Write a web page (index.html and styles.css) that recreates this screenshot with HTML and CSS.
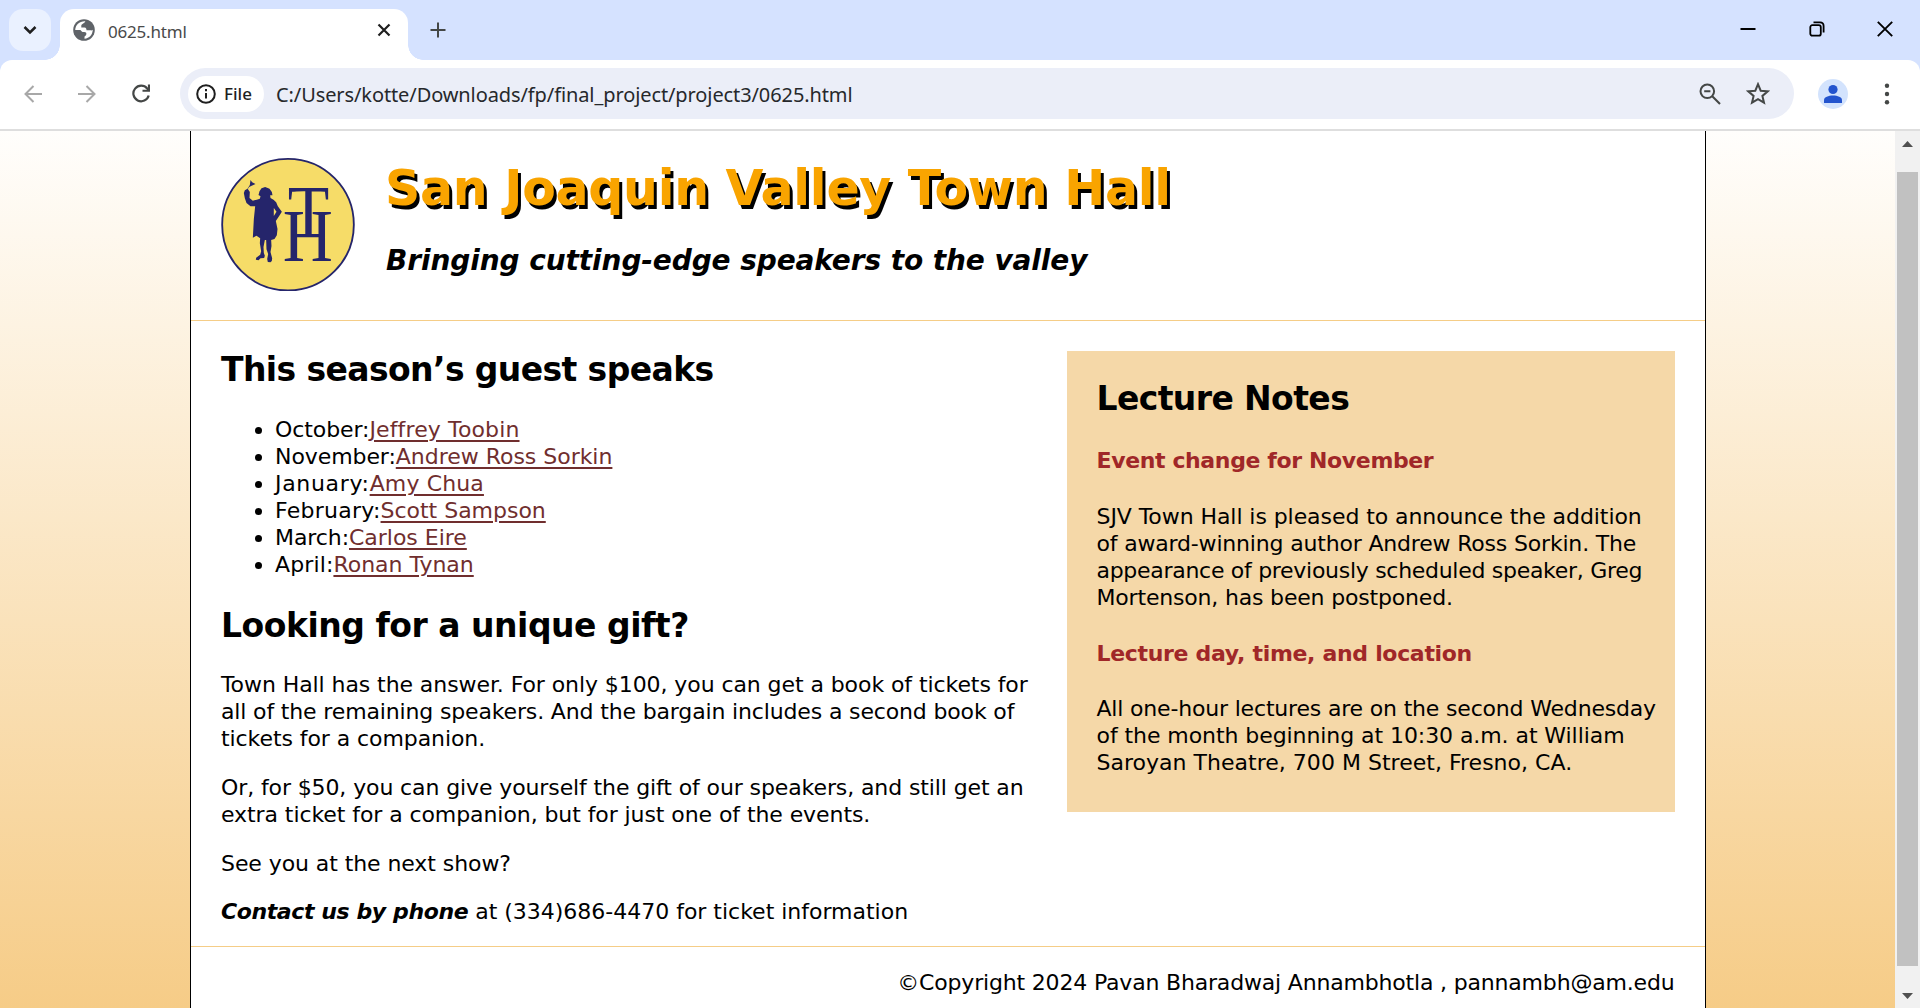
FILE: index.html
```html
<!DOCTYPE html>
<html lang="en">
<head>
<meta charset="utf-8">
<title>0625.html</title>
<link rel="stylesheet" href="styles.css">
</head>
<body>
<div class="browser">
  <div class="tabstrip">
    <div class="tab-search"><svg width="42" height="42" viewBox="0 0 42 42"><path d="M15.500 18l5.500 5.500 5.500-5.500" fill="none" stroke="#1f1f1f" stroke-width="2.500"/></svg></div>
    <div class="tab">
      <svg class="globe" width="22" height="22" viewBox="0 0 22 22"><circle cx="11" cy="11" r="10.800" fill="#5f6368"/><path d="M12.300 2.300C12 4.500 8.300 4.500 8.300 6.800V8.500H11.500C13.200 8.500 13.500 10 13.500 11.300H17.200C18 11.300 18.500 12 19.800 10.800C19.500 16 16.500 19.300 11.500 19.800V17.800C11.500 17 13.400 17 13.400 14.800C13.400 12.900 12 12.900 9.500 12.900C8.500 12.900 8.200 11 7 11H2.200C2.500 6 6.500 2 12.300 2.300Z" fill="#fff"/></svg>
      <span class="tab-title">0625.html</span>
      <svg class="tab-close" width="14" height="14" viewBox="0 0 14 14"><path d="M1.500 1.500l11 11M12.500 1.500l-11 11" stroke="#1f1f1f" stroke-width="2.200"/></svg>
    </div>
    <svg class="new-tab" width="16" height="16" viewBox="0 0 16 16"><path d="M8 .5v15M.5 8h15" stroke="#444746" stroke-width="2"/></svg>
    <div class="window-buttons">
      <svg width="16" height="16" viewBox="0 0 16 16"><path d="M.5 9h15" transform="translate(0 -1)" stroke="#000" stroke-width="2"/></svg>
      <svg width="16" height="16" viewBox="0 0 16 16"><rect x="1.300" y="4.200" width="10.500" height="10.500" rx="2" fill="none" stroke="#000" stroke-width="1.800"/><path d="M4.500 1.300H11Q14.600 1.300 14.600 5V11.500" fill="none" stroke="#000" stroke-width="1.800"/></svg>
      <svg width="16" height="16" viewBox="0 0 16 16"><path d="M.8.800l14.400 14.400M15.200.800L.8 15.200" stroke="#000" stroke-width="1.900"/></svg>
    </div>
  </div>
  <div class="toolbar">
    <svg class="back" width="18" height="18" viewBox="0 0 18 18"><path d="M18 9H2M9.500 1L1.500 9l8 8" fill="none" stroke="#a8a8a8" stroke-width="2"/></svg>
    <svg class="forward" width="18" height="18" viewBox="0 0 18 18"><path d="M0 9h16M8.500 1l8 8-8 8" fill="none" stroke="#a8a8a8" stroke-width="2"/></svg>
    <svg class="reload" width="19" height="19" viewBox="0 0 19 19"><path d="M16.700 11.500A7.800 7.800 0 1 1 15.200 4.500L17 6.500" fill="none" stroke="#444746" stroke-width="2.200"/><path d="M18 .5V7.800H10.500V5.700H15.900V.5Z" fill="#444746"/></svg>
    <div class="omnibox">
      <div class="chip">
        <svg width="20" height="20" viewBox="0 0 20 20"><circle cx="10" cy="10" r="8.800" fill="none" stroke="#1f1f1f" stroke-width="2"/><path d="M10 9v5.500M10 5v2.200" stroke="#1f1f1f" stroke-width="2"/></svg>
        <span>File</span>
      </div>
      <span class="url">C:/Users/kotte/Downloads/fp/final_project/project3/0625.html</span>
      <svg class="zoom-out" width="22" height="22" viewBox="0 0 22 22"><circle cx="8.300" cy="8.300" r="6.800" fill="none" stroke="#444746" stroke-width="2"/><path d="M13 13l8 8M5.200 8.300h6.200" stroke="#444746" stroke-width="2.100"/></svg>
      <svg class="star" width="24" height="23" viewBox="0 0 24 23"><path d="M12 2.200l2.700 6.500 7 .6-5.300 4.600 1.600 6.800L12 17.100l-6 3.600 1.600-6.800L2.300 9.300l7-.6z" fill="none" stroke="#444746" stroke-width="2"/></svg>
    </div>
    <svg class="profile" width="30" height="30" viewBox="0 0 30 30"><circle cx="15" cy="15" r="15" fill="#d3e3fd"/><circle cx="15" cy="10.500" r="4.600" fill="#2354ce"/><path d="M6 24V21.200C6 15 24 15 24 21.200V24Z" fill="#2354ce"/></svg>
    <svg class="menu" width="6" height="22" viewBox="0 0 6 22"><g fill="#444746"><circle cx="3" cy="2.700" r="2.200"/><circle cx="3" cy="11" r="2.200"/><circle cx="3" cy="19.300" r="2.200"/></g></svg>
  </div>
  <div class="viewport">
    <div class="page">
      <div class="container">
        <header>
          <svg class="logo" width="134" height="134" viewBox="123.500 80 402 402">
            <circle cx="324.500" cy="283" r="197.500" fill="#f6dc68" stroke="#25256b" stroke-width="5.500"/>
            <g transform="translate(165 120)" fill="#25256b">
              <path d="M47 29L52 36L62 41L49 47L43 50L39 56L45 65L44 83L54 91L66 88L75 85L77 78L71 74L74 63L80 54L91 50L104 55L111 65L113 75L106 75L107 83L116 88L124 96L129 108L141 124L133 137L123 152L128 176L126 195L119 206L109 209L110 227L107 245L112 264L111 272L107 276L99 275L97 266L100 251L95 237L94 209H90L86 230L87 248L90 256L88 263L77 264L71 270L63 268L64 262L76 253L79 243L75 219L76 204L65 196L54 202L57 147L61 108L47 108L35 98L30 84L27 68L30 60L38 55L45 44Z"/>
              <path d="M117 113L125 124L117 137Z" fill="#f6dc68"/>
              <text class="mono-h" transform="translate(144 273) scale(.93 1)">H</text>
              <text class="mono-t" transform="translate(159 200) scale(.91 1)">T</text>
            </g>
          </svg>
          <div class="titles">
            <h1>San Joaquin Valley Town Hall</h1>
            <p class="tagline">Bringing cutting-edge speakers to the valley</p>
          </div>
        </header>
        <div class="columns">
          <main>
            <h2>This season’s guest speaks</h2>
            <ul>
              <li>October:<a href="#">Jeffrey Toobin</a></li>
              <li>November:<a class="snug" href="#">Andrew Ross Sorkin</a></li>
              <li><span class="january">January:</span><a href="#">Amy Chua</a></li>
              <li><span class="february">February:</span><a class="snug" href="#">Scott Sampson</a></li>
              <li>March:<a class="snug" href="#">Carlos Eire</a></li>
              <li><span class="april">April:</span><a class="snug" href="#">Ronan Tynan</a></li>
            </ul>
            <h2 class="gift">Looking for a unique gift?</h2>
            <p>Town Hall has the answer. For only $100, you can get a book of tickets for<br><span class="snugger">all of the remaining speakers. And the bargain includes a second book of</span><br>tickets for a companion.</p>
            <p><span class="offer">Or, for $50, you can give yourself the gift of our speakers, and still get an</span><br>extra ticket for a companion, but for just one of the events.</p>
            <p>See you at the next show?</p>
            <p class="contact"><em>Contact us by phone</em> at (334)686-4470 for ticket information</p>
          </main>
          <aside>
            <h2>Lecture Notes</h2>
            <h3>Event change for November</h3>
            <p><span class="loose">SJV Town Hall is pleased to announce the addition</span><br>of award-winning author Andrew Ross Sorkin. The<br><span class="tight">appearance of previously scheduled speaker, Greg</span><br>Mortenson, has been postponed.</p>
            <h3 class="where">Lecture day, time, and location</h3>
            <p>All one-hour lectures are on the second Wednesday<br><span class="loose">of the month beginning at 10:30 a.m. at William</span><br><span class="theatre">Saroyan Theatre, 700 M Street, Fresno, CA.</span></p>
          </aside>
        </div>
        <footer>©Copyright 2024 Pavan Bharadwaj Annambhotla , pannambh@am.edu</footer>
      </div>
    </div>
    <div class="scrollbar">
      <svg width="11" height="6" viewBox="0 0 11 6"><path d="M0 6L5.500 0 11 6Z" fill="#505050"/></svg>
      <div class="thumb"></div>
      <svg width="11" height="6" viewBox="0 0 11 6"><path d="M0 0L5.500 6 11 0Z" fill="#505050"/></svg>
    </div>
  </div>
</div>
</body>
</html>
```
FILE: styles.css
```css
* { box-sizing: border-box; }
body { margin: 0; background: #fff; }
h1, h2, h3, p, ul { margin: 0; padding: 0; }
svg { display: block; flex: none; }

.browser { width: 1920px; height: 1008px; display: flex; flex-direction: column; overflow: hidden; background: #d5e2ff; }

.tabstrip { height: 60px; flex: none; display: flex; align-items: flex-start; padding: 9px 27px 0 9px; }
.tab-search { width: 42px; height: 42px; border-radius: 14px; background: #eaf1ff; }
.tab { position: relative; width: 348px; height: 51px; margin-left: 9px; padding: 0 17px 9px 13px; border-radius: 14px 14px 0 0; background: #fff; display: flex; align-items: center; }
.tab::before, .tab::after { content: ""; position: absolute; bottom: 0; width: 15px; height: 15px; }
.tab::before { left: -15px; background: radial-gradient(circle at 0 0, transparent 14.5px, #fff 15px); }
.tab::after { right: -15px; background: radial-gradient(circle at 100% 0, transparent 14.5px, #fff 15px); }
.tab-title { margin-left: 13px; padding-top: 3px; flex: 1; font: 17px/24px "Noto Sans", "Open Sans", sans-serif; letter-spacing: -.2px; color: #4a4a4a; }
.new-tab { margin: 13px 0 0 22px; }
.window-buttons { margin: 12px 0 0 auto; display: flex; gap: 52.5px; }

.toolbar { height: 71px; flex: none; display: flex; align-items: center; padding: 0 30px 2px 24px; border-bottom: 2px solid #dedede; border-radius: 12px 12px 0 0; background: #fff; }
.forward { margin-left: 36px; }
.reload { margin-left: 36px; }
.omnibox { width: 1614px; height: 51px; margin-left: 29px; border-radius: 26px; background: #ebeef8; display: flex; align-items: center; padding: 0 24px 0 8px; }
.chip { width: 76px; height: 36px; border-radius: 18px; background: #fff; display: flex; align-items: center; padding-left: 8px; gap: 8px; font: 500 17px/24px "Noto Sans", "Open Sans", sans-serif; color: #1f1f1f; }
.chip span { padding-top: 1px; }
.url { flex: 1; margin-left: 12px; padding-top: 2px; font: 20px/28px "Noto Sans", "Open Sans", sans-serif; letter-spacing: -.1px; color: #26282b; }
.star { margin-left: 25px; }
.profile { margin-left: 24px; }
.menu { margin-left: 36px; }

.viewport { flex: 1; display: flex; min-height: 0; }
.page { width: 1895px; display: flex; padding-left: 190px; background: linear-gradient(#fffefc, #f6cc87); font: 22px/27px "DejaVu Sans", Verdana, sans-serif; color: #000; letter-spacing: -.08px; white-space: nowrap; }
.container { width: 1516px; border: solid #000; border-width: 0 1px; background: #fff; }

header { height: 190px; display: flex; padding: 26px 0 0 30px; border-bottom: 1px solid #f5cd87; }
.titles { margin-left: 30px; padding-top: 2px; }
h1 { font-size: 49px; line-height: 60px; letter-spacing: -.28px; color: #f9a400; text-shadow: 3px 4px 0 #000; }
.tagline { margin: 25px 0 0 1px; font: italic bold 28px/34px "DejaVu Sans", Verdana, sans-serif; letter-spacing: -.1px; }
.mono-h, .mono-t { font-family: "Liberation Serif", serif; font-size: 224px; letter-spacing: 0; }

.columns { display: flex; height: 625px; padding-left: 30px; }
main { width: 846px; padding-top: 29px; }
h2 { font-size: 33px; line-height: 40px; letter-spacing: -.6px; }
h2.gift { margin: 28px 0 25px; letter-spacing: -.48px; }
ul { margin-top: 26px; padding-left: 54px; }
a { color: #702e2e; text-decoration: underline; text-decoration-thickness: 2px; text-underline-offset: 3px; letter-spacing: .13px; }
a.snug { letter-spacing: -.02px; }
.january { letter-spacing: .68px; }
.february { letter-spacing: .25px; }
.april { letter-spacing: .12px; }
.snugger { letter-spacing: -.15px; }
.offer { letter-spacing: -.11px; }
main p + p { margin-top: 22px; }
main p.contact { margin-top: 21px; letter-spacing: -.01px; }
em { font-weight: bold; letter-spacing: -.4px; }

aside { width: 608px; height: 461px; margin-top: 30px; padding: 28px 0 0 29.5px; background: #f5d8a8; letter-spacing: -.18px; }
aside h2 { letter-spacing: -.6px; }
h3 { margin: 28px 0 29px; font-size: 22px; line-height: 27px; letter-spacing: -.37px; color: #a02728; }
h3.where { margin: 29px 0 28px; letter-spacing: -.32px; }
.loose { letter-spacing: -.07px; }
.tight { letter-spacing: -.29px; }
.theatre { letter-spacing: .02px; }

footer { border-top: 1px solid #f5cd87; padding: 22px 30.5px 0 0; text-align: right; letter-spacing: -.18px; }

.scrollbar { width: 25px; background: #f1f1f1; display: flex; flex-direction: column; align-items: center; padding: 10px 0 9px; justify-content: space-between; }
.thumb { width: 21px; height: 794px; margin: 25px 0 27px; background: #c1c1c1; }
```
